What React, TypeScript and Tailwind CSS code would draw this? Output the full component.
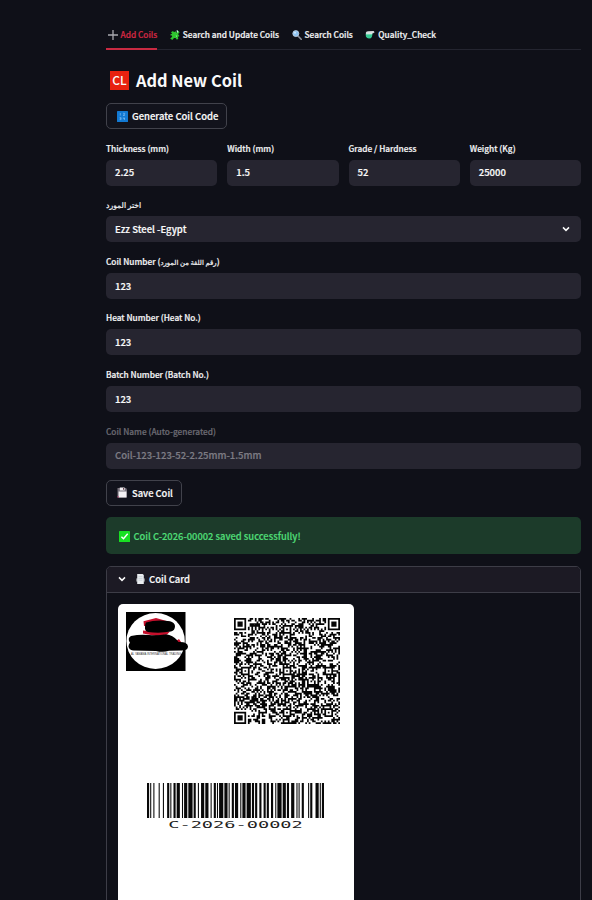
import React from 'react';

// Code 128 bar/space widths for C-2026-00002
const CODE128 = [
  '211214', '131321', '122132', '113141', '221231', '321221', '114131',
  '122132', '113141', '212222', '212222', '114131', '223211', '122411', '2331112',
];

const barcodePath = () => {
  let x = 0;
  let d = '';
  CODE128.join('').split('').forEach((n, i) => {
    if (i % 2 === 0) d += `M${x} 0h${n}v35h-${n}z`;
    x += Number(n);
  });
  return d;
};

const QR_SIZE = 61;

const qrPath = () => {
  let seed = 202602;
  const rand = () => {
    seed = (seed * 1103515245 + 12345) % 2147483648;
    return seed / 2147483648;
  };
  const inFinder = (r: number, c: number) =>
    (r < 8 && c < 8) || (r < 8 && c >= QR_SIZE - 8) || (r >= QR_SIZE - 8 && c < 8);
  const finder = (r: number, c: number) => {
    const y = r < 8 ? r : r - (QR_SIZE - 7);
    const x = c < 8 ? c : c - (QR_SIZE - 7);
    if (x < 0 || y < 0 || x > 6 || y > 6) return false;
    return Math.max(Math.abs(x - 3), Math.abs(y - 3)) !== 2;
  };
  const aligns = [[6, 30], [30, 6], [30, 30], [30, 54], [54, 30], [54, 54]];
  let d = '';
  for (let r = 0; r < QR_SIZE; r++) {
    for (let c = 0; c < QR_SIZE; c++) {
      let on = rand() > 0.49;
      const a = aligns.find(([ar, ac]) => Math.abs(ar - r) < 3 && Math.abs(ac - c) < 3);
      if (inFinder(r, c)) on = finder(r, c);
      else if (a) on = Math.max(Math.abs(a[0] - r), Math.abs(a[1] - c)) !== 1;
      else if (r === 6 || c === 6) on = (r + c) % 2 === 0;
      if (on) d += `M${c} ${r}h1v1h-1z`;
    }
  }
  return d;
};

const Plus = () => (
  <svg className="h-[10px] w-[10px]" viewBox="0 0 10 10" stroke="#a9a9ae" strokeWidth="1.3">
    <path d="M5 0v10M0 5h10" />
  </svg>
);

const Puzzle = () => (
  <svg className="h-[10px] w-[10px]" viewBox="0 0 10 10">
    <path fill="#2fc62f" d="M1 2.2 3 1l1 1.2 1.6-1 1 1.6L8.4 1l1.2 1.5L8 4l1.4 2-1.6 1 .6 1.6L7 9.7 5.6 7.9 4 8 2.3 10 .2 8.6l2-1.8-.4-1.4L.3 5.2l.5-1.1 1.5-.2z" />
    <path fill="#b8f5d5" d="M6.4.6 7.7.2 8.5 2 7.2 2.8zM5.8 5.3l1.2.8-.7 1z" />
  </svg>
);

const Magnifier = () => (
  <svg className="h-[10px] w-[10px]" viewBox="0 0 10 10">
    <path d="m6 6 3.2 3.2" stroke="#8c8f9b" strokeWidth="1.6" strokeLinecap="round" />
    <circle cx="3.8" cy="3.6" r="3" fill="#8fc4f2" stroke="#c4d4e6" strokeWidth=".8" />
    <circle cx="3" cy="2.7" r="1" fill="#d6edff" />
  </svg>
);

const TestTube = () => (
  <svg className="h-[10px] w-[10px]" viewBox="0 0 10 10">
    <path fill="#d9dde0" d="M.6 3.2Q1 1.4 3 1.3l5.6-.2 1 1.2-2.2 1.4z" />
    <path fill="#35c993" d="M.6 3.7h7L6.8 7Q6.2 8.5 4 8.5T1 6.8z" />
    <path fill="#effaf6" d="M1 3.2h6v1.1H1z" />
  </svg>
);

const Numbers = () => (
  <svg className="h-[11px] w-[11px]" viewBox="0 0 11 11">
    <rect width="11" height="11" rx=".6" fill="#1279d3" />
    <path d="M3.3 2v2.6M6 2.3h1.7v1L6 4.4h2M2.6 6.6h1.5v2H2.6M2.8 7.6h1.3M6.3 6.4v1.3h1.6M7.5 6.6v2.3" fill="none" stroke="#8cc5f5" strokeWidth=".6" />
  </svg>
);

const Floppy = () => (
  <svg className="h-[11px] w-[11px]" viewBox="0 0 11 11">
    <path fill="#77727c" d="M.5 1h8.500L10 2.600v7.900H.5z" />
    <path fill="#f3f1f4" d="M2.800.6h4.800v2.800H2.800zM1.600 4.600h7.800v5.800H1.600z" />
    <path fill="#6b4450" d="M6 1h1v1.800H6z" />
    <path fill="#c4497a" d="M.5 9.200h1.300v1.300H.5z" />
  </svg>
);

const Check = () => (
  <svg className="h-[11px] w-[11px]" viewBox="0 0 11 11">
    <rect width="11" height="11" rx=".6" fill="#18e022" />
    <path d="m2.4 5.7 2.1 2.1 4.2-5" fill="none" stroke="#fff" strokeWidth="1.4" />
  </svg>
);

const Receipt = () => (
  <svg className="h-[10px] w-[9px]" viewBox="0 0 9 10">
    <path fill="#82858a" d="M0 4.4h9v3.200H0z" />
    <path fill="#e9edf0" d="M1.2 0h5.4l1.2 1v9H1.2z" />
    <path stroke="#b9c4cd" strokeWidth=".6" d="M2.4 2.6h4M2.4 4.4h4M2.4 6.2h4" />
  </svg>
);

const Chevron = () => (
  <svg className="h-[6px] w-[8px]" viewBox="0 0 8 6" fill="none" stroke="#fafafa" strokeWidth="1.5">
    <path d="m1 1.4 3 3 3-3" />
  </svg>
);

const Logo = () => (
  <svg className="h-[60px] w-[64px]" viewBox="0 0 64 60">
    <path fill="#000" d="M0 0h59.5v59H0z" />
    <ellipse cx="29.6" cy="29" rx="29.2" ry="28" fill="#fff" />
    <path fill="#c5102c" d="M17.500 9.300 30 5.900l14 4-1 4H18zM17 18.500l9 1h18l-3 3-11 1.500-13-2.500zM50 29l3-2 2 3-2 2z" />
    <path fill="#000" d="M20 10.5q10-3 24-1.3 4.500 1 5 4.800 0 4.500-4 5.500-11 2-23 .5-3.500-1-3-5 0-3.500 1-4.500zM5 24q9-2 18-1 10 .6 17-.8 7 1 11 5.800l1.500 2q9-.5 9.500 4.500 0 4-6 4l-13 .2q-6 2-13 .2l-23-.5Q3 38 2.500 34.500 3 31 4 31 1 26 5 24z" />
    <text x="5" y="42.600" fontSize="3.200" textLength="50" lengthAdjust="spacingAndGlyphs" fill="#333" fontFamily="Liberation Sans, sans-serif">AL YAMAMA INTERNATIONAL TRADING</text>
  </svg>
);

type FieldProps = { label: React.ReactNode; value: string; muted?: boolean; select?: boolean };

const Field = ({ label, value, muted, select }: FieldProps) => (
  <div className="min-w-0 flex-1">
    <div className={`flex h-[30.6px] items-center pt-[7px] text-[8.3px] font-medium ${muted ? 'text-[#6b6a72]' : 'text-[#f4f4f6]'}`}>
      <span>{label}</span>
    </div>
    <div className={`flex h-[26px] items-center justify-between rounded-[5px] bg-[#262530] pr-[11px] pl-[9px] text-[9.5px] font-medium ${muted ? 'text-[#7d7c84]' : 'text-[#fafafa]'}`}>
      <span>{value}</span>
      {select && <Chevron />}
    </div>
  </div>
);

const tabs = [
  { icon: <Plus />, label: 'Add Coils', style: 'border-[#c92a42] text-[#d32843]' },
  { icon: <Puzzle />, label: 'Search and Update Coils', style: 'border-transparent text-[#f4f4f6]' },
  { icon: <Magnifier />, label: 'Search Coils', style: 'border-transparent text-[#f4f4f6]' },
  { icon: <TestTube />, label: 'Quality_Check', style: 'border-transparent text-[#f4f4f6]' },
];

export default function App() {
  return (
    <div className="h-[900px] overflow-hidden bg-[#0f1018] pr-[11px] pl-[106px] font-['Noto_Sans_CJK_SC','DejaVu_Sans',sans-serif] whitespace-nowrap text-[#fafafa] [-webkit-text-stroke:0.2px]">
      <nav className="flex h-[50px] gap-[11px] border-b border-[#242530] pt-[21px] text-[8.3px] font-medium">
        {tabs.map((tab) => (
          <div key={tab.label} className={`-mb-px flex items-center gap-[3px] border-b-2 pl-[1.500px] ${tab.style}`}>
            {tab.icon}
            <span>{tab.label}</span>
          </div>
        ))}
      </nav>

      <h1 className="flex h-[53px] items-center gap-[7px] pt-[7px] pl-[4px] text-[16.4px] font-bold [-webkit-text-stroke:0px]">
        <span className="flex h-[19px] w-[19px] items-center justify-center bg-[#e8220f] text-[12px] font-medium">CL</span>
        Add New Coil
      </h1>

      <button className="flex h-[26px] w-[121px] items-center gap-[4px] rounded-[5px] border border-[#41424b] bg-[#12131c] pl-[10px] text-[9.5px] font-medium">
        <Numbers />
        Generate Coil Code
      </button>

      <div className="flex gap-[10px]">
        <Field label="Thickness (mm)" value="2.25" />
        <Field label="Width (mm)" value="1.5" />
        <Field label="Grade / Hardness" value="52" />
        <Field label="Weight (Kg)" value="25000" />
      </div>
      <Field label={<span dir="rtl" className="text-[7.7px]">اختر المورد</span>} value="Ezz Steel -Egypt" select />
      <Field
        label={<>Coil Number (<span className="text-[6.9px]">رقم اللفة من المورد</span>)</>}
        value="123"
      />
      <Field label="Heat Number (Heat No.)" value="123" />
      <Field label="Batch Number (Batch No.)" value="123" />
      <Field label="Coil Name (Auto-generated)" value="Coil-123-123-52-2.25mm-1.5mm" muted />

      <button className="mt-[11px] flex h-[26px] w-[76px] items-center gap-[4px] rounded-[5px] border border-[#41424b] bg-[#12131c] pl-[10px] text-[9.4px] font-medium">
        <Floppy />
        Save Coil
      </button>

      <div className="mt-[11px] flex h-[37px] items-center gap-[4px] rounded-[5px] bg-[#1c3b2a] pt-[2px] pl-[12.500px] text-[9.4px] font-medium text-[#4fdc76]">
        <Check />
        Coil C-2026-00002 saved successfully!
      </div>

      <section className="mt-[12px] h-[400px] rounded-[5px] border border-[#3d3d47]">
        <header className="flex h-[26px] items-center rounded-t-[4px] border-b border-[#3d3d47] bg-[#1c1a24] pl-[11px] text-[9.5px] font-medium">
          <Chevron />
          <span className="ml-[10px] flex items-center gap-[4px]">
            <Receipt />
            Coil Card
          </span>
        </header>
        <div className="mt-[11px] ml-[11px] h-[360px] w-[236px] rounded-[5px] bg-white">
          <div className="flex justify-between pt-[8px] pr-[14px] pl-[8px]">
            <Logo />
            <svg className="mt-[6px] h-[106px] w-[106px]" viewBox="0 0 61 61">
              <path d={qrPath()} fill="#050505" />
            </svg>
          </div>
          <div className="mt-[59px] flex flex-col items-center pr-[1px]">
            <svg className="h-[35px] w-[177px]" viewBox="0 0 167 35" preserveAspectRatio="none">
              <path d={barcodePath()} fill="#080808" />
            </svg>
            <span className="mt-[2px] scale-x-[2.07] font-['DejaVu_Sans_Mono',monospace] text-[9px] leading-[10px] text-[#222] [-webkit-text-stroke:0px]">C-2026-00002</span>
          </div>
        </div>
      </section>
    </div>
  );
}
